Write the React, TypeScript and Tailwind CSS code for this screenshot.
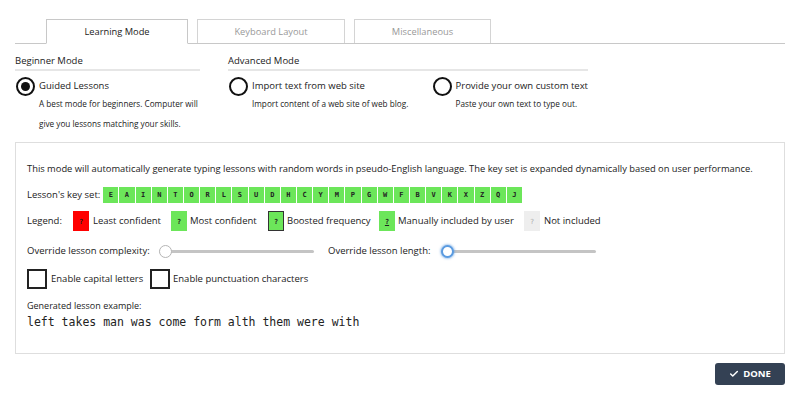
import { Check } from "lucide-react";

const keys = "EAINTORLSUDHCYMPGWFBVKXZQJ".split("");

function Radio({ checked }: { checked?: boolean }) {
  return (
    <span className="flex h-[19px] w-[19px] shrink-0 items-center justify-center rounded-full border-2 border-[#111]">
      {checked && <span className="h-[9px] w-[9px] rounded-full bg-[#111]" />}
    </span>
  );
}

function Option({
  label,
  desc,
  checked,
}: {
  label: string;
  desc: string[];
  checked?: boolean;
}) {
  return (
    <div className="whitespace-nowrap">
      <div className="flex items-center gap-[4px] pl-px">
        <Radio checked={checked} />
        <span className="text-[9.5px] text-[#222]">{label}</span>
      </div>
      <div className="-mt-[2px] pl-[24px] text-[8.2px] leading-[20px] text-[#222]">
        {desc.map((d) => (
          <div key={d}>{d}</div>
        ))}
      </div>
    </div>
  );
}

function Slider({ focused }: { focused?: boolean }) {
  return (
    <div className="relative flex h-[14px] w-[155px] items-center">
      <div className="h-[3px] w-full rounded-full bg-[#c4c4c4]" />
      <span
        className={
          focused
            ? "absolute left-0 top-[1px] h-[13px] w-[13px] rounded-full border-2 border-[#5b9be0] bg-white shadow-[0_0_2px_1px_rgba(91,155,224,0.5)]"
            : "absolute left-0 top-[1px] h-[13px] w-[13px] rounded-full border border-[#b5b5b5] bg-white"
        }
      />
    </div>
  );
}

function LegendKey({ className }: { className: string }) {
  return (
    <span
      className={`flex h-[20px] w-[16px] shrink-0 items-center justify-center pt-[3px] font-['DejaVu_Sans_Mono',monospace] text-[7px] font-bold ${className}`}
    >
      ?
    </span>
  );
}

export default function App() {
  return (
    <div className="h-[394px] w-[800px] overflow-hidden bg-white px-[15px] font-['Open_Sans',sans-serif] text-[#222]">
      {/* tabs */}
      <div className="flex gap-[9px] border-b border-[#c8c8c8] pl-[31px] pt-[19px]">
        <div className="-mb-px flex h-[25px] w-[142px] items-center justify-center border border-b-white border-[#c8c8c8] bg-white text-[9.3px] text-[#222]">
          Learning Mode
        </div>
        <div className="flex h-[24px] w-[148px] items-center justify-center border border-b-0 border-[#d4d4d4] text-[9.3px] text-[#999]">
          Keyboard Layout
        </div>
        <div className="flex h-[24px] w-[137px] items-center justify-center border border-b-0 border-[#d4d4d4] text-[9.3px] text-[#999]">
          Miscellaneous
        </div>
      </div>

      {/* modes */}
      <div className="mt-[10px] flex gap-[28px]">
        <div className="w-[185px]">
          <div className="border-b-2 border-[#e6e6e6] pb-[1px] text-[9.5px] leading-[14px]">
            Beginner Mode
          </div>
          <div className="mt-[6px]">
            <Option
              checked
              label="Guided Lessons"
              desc={[
                "A best mode for beginners. Computer will",
                "give you lessons matching your skills.",
              ]}
            />
          </div>
        </div>
        <div className="w-[360px]">
          <div className="border-b-2 border-[#e6e6e6] pb-[1px] text-[9.5px] leading-[14px]">
            Advanced Mode
          </div>
          <div className="mt-[6px] flex">
            <div className="w-[208px]">
              <Option
                label="Import text from web site"
                desc={["Import content of a web site of web blog."]}
              />
            </div>
            <Option
              label="Provide your own custom text"
              desc={["Paste your own text to type out."]}
            />
          </div>
        </div>
      </div>

      {/* panel */}
      <div className="mt-[8px] h-[212px] whitespace-nowrap border border-[#dedede] px-[11px] pt-[19px]">
        <div className="text-[9.35px] leading-[14px]">
          This mode will automatically generate typing lessons with random words in
          pseudo-English language. The key set is expanded dynamically based on user
          performance.
        </div>

        <div className="mt-[11px] flex items-center gap-[3px]">
          <span className="text-[9.5px]">Lesson's key set:</span>
          <div className="flex gap-px">
            {keys.map((k) => (
              <span
                key={k}
                className="flex h-[16px] w-[15.15px] items-center justify-center bg-[#6ce65a] font-['DejaVu_Sans_Mono',monospace] text-[7px] font-bold text-[#222]"
              >
                {k}
              </span>
            ))}
          </div>
        </div>

        <div className="mt-[8px] flex items-center text-[9.5px]">
          <span className="w-[46px]">Legend:</span>
          <LegendKey className="bg-[#ff0000] text-[#222]" />
          <span className="ml-[4px] w-[78px]">Least confident</span>
          <LegendKey className="bg-[#6ce65a] text-[#222]" />
          <span className="ml-[3px] w-[78px]">Most confident</span>
          <LegendKey className="border border-[#333] bg-[#6ce65a] text-[#222]" />
          <span className="ml-[3px] w-[92px]">Boosted frequency</span>
          <LegendKey className="bg-[#6ce65a] text-[#222] underline" />
          <span className="ml-[3px] w-[126px]">Manually included by user</span>
          <LegendKey className="bg-[#eeeeee] text-[#aaa] font-normal" />
          <span className="ml-[4px]">Not included</span>
        </div>

        <div className="mt-[13px] flex items-center text-[9.5px]">
          <span className="w-[132px] shrink-0">Override lesson complexity:</span>
          <Slider />
          <span className="ml-[14px] w-[113px] shrink-0">Override lesson length:</span>
          <Slider focused />
        </div>

        <div className="mt-[11px] flex items-center text-[9.5px]">
          <span className="h-[20px] w-[20px] shrink-0 border-2 border-[#222]" />
          <span className="ml-[4px] w-[99px]">Enable capital letters</span>
          <span className="h-[20px] w-[20px] shrink-0 border-2 border-[#222]" />
          <span className="ml-[3px]">Enable punctuation characters</span>
        </div>

        <div className="mt-[11px] text-[9px] leading-[12px]">Generated lesson example:</div>
        <div className="mt-[3px] font-['DejaVu_Sans_Mono',monospace] text-[11.5px] leading-[15px] text-[#222]">
          left takes man was come form alth them were with
        </div>
      </div>

      {/* footer */}
      <div className="mt-[9px] flex justify-end">
        <button className="flex h-[22px] w-[70px] items-center justify-center gap-[4px] rounded-[3px] bg-[#344154] text-[9.5px] font-bold text-white">
          <Check size={10} strokeWidth={3.5} />
          DONE
        </button>
      </div>
    </div>
  );
}
